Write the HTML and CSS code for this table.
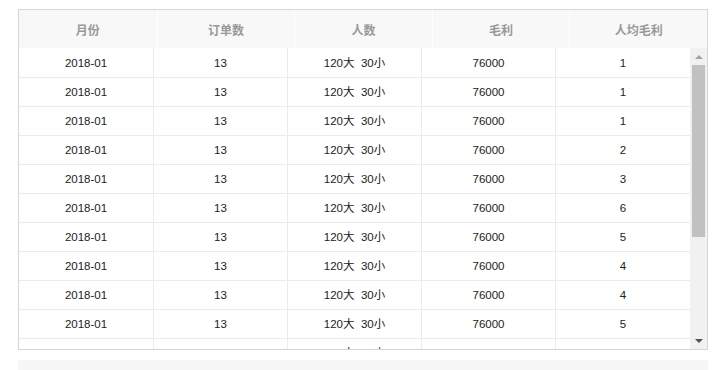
FILE: index.html
```html
<!DOCTYPE html>
<html lang="zh">
<head>
<meta charset="utf-8">
<link rel="stylesheet" href="styles.css">
</head>
<body>
<div class="grid">
  <div class="head">
    <div class="hcell">月份</div>
    <div class="hcell">订单数</div>
    <div class="hcell">人数</div>
    <div class="hcell">毛利</div>
    <div class="hcell">人均毛利</div>
  </div>
  <div class="body">
    <div class="rows">
      <div class="row"><div class="cell">2018-01</div><div class="cell">13</div><div class="cell">120大&nbsp;&nbsp;30小</div><div class="cell">76000</div><div class="cell">1</div></div>
      <div class="row"><div class="cell">2018-01</div><div class="cell">13</div><div class="cell">120大&nbsp;&nbsp;30小</div><div class="cell">76000</div><div class="cell">1</div></div>
      <div class="row"><div class="cell">2018-01</div><div class="cell">13</div><div class="cell">120大&nbsp;&nbsp;30小</div><div class="cell">76000</div><div class="cell">1</div></div>
      <div class="row"><div class="cell">2018-01</div><div class="cell">13</div><div class="cell">120大&nbsp;&nbsp;30小</div><div class="cell">76000</div><div class="cell">2</div></div>
      <div class="row"><div class="cell">2018-01</div><div class="cell">13</div><div class="cell">120大&nbsp;&nbsp;30小</div><div class="cell">76000</div><div class="cell">3</div></div>
      <div class="row"><div class="cell">2018-01</div><div class="cell">13</div><div class="cell">120大&nbsp;&nbsp;30小</div><div class="cell">76000</div><div class="cell">6</div></div>
      <div class="row"><div class="cell">2018-01</div><div class="cell">13</div><div class="cell">120大&nbsp;&nbsp;30小</div><div class="cell">76000</div><div class="cell">5</div></div>
      <div class="row"><div class="cell">2018-01</div><div class="cell">13</div><div class="cell">120大&nbsp;&nbsp;30小</div><div class="cell">76000</div><div class="cell">4</div></div>
      <div class="row"><div class="cell">2018-01</div><div class="cell">13</div><div class="cell">120大&nbsp;&nbsp;30小</div><div class="cell">76000</div><div class="cell">4</div></div>
      <div class="row"><div class="cell">2018-01</div><div class="cell">13</div><div class="cell">120大&nbsp;&nbsp;30小</div><div class="cell">76000</div><div class="cell">5</div></div>
      <div class="row"><div class="cell">2018-01</div><div class="cell">13</div><div class="cell">120大&nbsp;&nbsp;30小</div><div class="cell">76000</div><div class="cell">5</div></div>
    </div>
    <div class="scrollbar">
      <div class="arrow up"></div>
      <div class="thumb"></div>
      <div class="track"></div>
      <div class="arrow down"></div>
    </div>
  </div>
</div>
<div class="footer"></div>
</body>
</html>
```

FILE: styles.css
```css
html, body {
  margin: 0;
  padding: 0;
  background: #fff;
}
body {
  padding: 9px 14px 0 18px;
  font-family: "Liberation Sans", "Noto Sans CJK SC", sans-serif;
  font-size: 12px;
  color: #333;
}
.grid {
  width: 688px;
  border: 1px solid #d6d6d6;
}
.head {
  display: grid;
  grid-template-columns: repeat(5, 1fr);
  height: 38px;
  background: #f8f8f8;
}
.hcell {
  display: flex;
  align-items: center;
  justify-content: center;
  border-left: 1px solid #fff;
  color: #999;
  font-weight: bold;
  font-size: 12px;
  font-family: "Noto Sans CJK SC", sans-serif;
}
.hcell:first-child {
  border-left: none;
}
.body {
  display: flex;
  height: 301px;
  overflow: hidden;
}
.rows {
  width: 671px;
  overflow: hidden;
}
.row {
  display: grid;
  grid-template-columns: 134px 134px 134px 134px 135px;
  height: 29px;
  border-top: 1px solid #ebebeb;
  box-sizing: border-box;
}
.row:first-child {
  border-top: none;
}
.cell {
  display: flex;
  align-items: center;
  justify-content: center;
  border-left: 1px solid #ebebeb;
  color: #222;
  line-height: 14px;
  font-size: 11.5px;
}
.cell:first-child {
  border-left: none;
}
.scrollbar {
  width: 17px;
  background: #f1f1f1;
  display: flex;
  flex-direction: column;
  align-items: center;
}
.arrow {
  height: 17px;
  width: 17px;
  display: flex;
  align-items: center;
  justify-content: center;
  flex: none;
}
.arrow.up::before {
  content: "";
  border-left: 4px solid transparent;
  border-right: 4px solid transparent;
  border-bottom: 4px solid #a3a3a3;
}
.arrow.down::before {
  content: "";
  border-left: 4px solid transparent;
  border-right: 4px solid transparent;
  border-top: 4px solid #505050;
}
.thumb {
  width: 13px;
  height: 172px;
  background: #c1c1c1;
  flex: none;
}
.track {
  flex: 1;
}
.footer {
  width: 690px;
  height: 10px;
  margin-top: 10px;
  background: #f7f7f7;
}
```
